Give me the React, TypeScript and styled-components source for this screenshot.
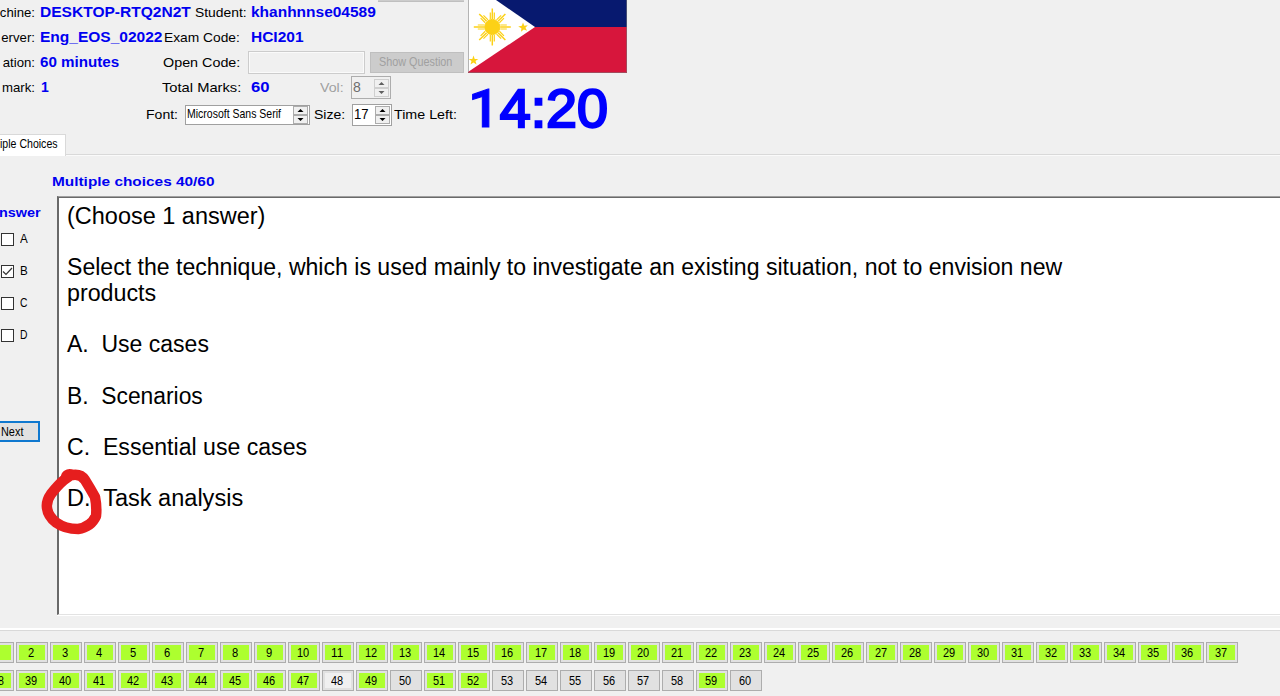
import React, { useLayoutEffect, useRef, useState } from 'react';
import styled, { createGlobalStyle } from 'styled-components';

const Global = createGlobalStyle`
  * { box-sizing: border-box; }
  body { margin: 0; background: #f0f0f0; overflow: hidden; font-family: "Liberation Sans", Arial, sans-serif; color: #000; }
`;

const FitBox = styled.span<{ $w: number; $gap: number; $dy: number; $size: number; $bold?: boolean; $color: string; $line?: number }>`
  display: block;
  flex: none;
  width: ${p => p.$w}px;
  margin-left: ${p => p.$gap}px;
  padding-top: ${p => p.$dy}px;
  font-size: ${p => p.$size}px;
  font-weight: ${p => (p.$bold ? 700 : 400)};
  color: ${p => p.$color};
  line-height: ${p => (p.$line ? `${p.$line}px` : 1.15)};
  white-space: pre;
`;
const FitInner = styled.span`
  display: inline-block;
  vertical-align: top;
  transform-origin: 0 50%;
`;

type FitProps = { w: number; size: number; gap?: number; dy?: number; bold?: boolean; color?: string; line?: number; children: React.ReactNode };

/* Text stretched or condensed horizontally to a fixed width. */
function Fit({ w, size, gap = 0, dy = 0, bold, color = '#000', line, children }: FitProps) {
  const ref = useRef<HTMLSpanElement>(null);
  const [scale, setScale] = useState(1);
  useLayoutEffect(() => {
    if (ref.current) setScale(w / ref.current.offsetWidth);
  }, [w, children]);
  return (
    <FitBox $w={w} $gap={gap} $dy={dy} $size={size} $bold={bold} $color={color} $line={line}>
      <FitInner ref={ref} style={{ transform: `scaleX(${scale})` }}>{children}</FitInner>
    </FitBox>
  );
}

const Blue = '#0000f0';

const Window = styled.div`
  width: 1280px;
  height: 696px;
  overflow: hidden;
  display: flex;
  flex-direction: column;
`;
const Header = styled.header`
  height: 134px;
  display: flex;
`;
const Info = styled.div`
  width: 468px;
  flex: none;
`;
const InfoRow = styled.div<{ $h?: number }>`
  height: ${p => p.$h || 25}px;
  display: flex;
  align-items: center;
`;
const EdgeLabel = styled.div`
  width: 35px;
  flex: none;
  display: flex;
  justify-content: flex-end;
  font-size: 13.2px;
  line-height: 16px;
  white-space: nowrap;
`;
const ButtonStub = styled.div`
  align-self: flex-start;
  width: 86px;
  height: 2px;
  margin-left: 2px;
  background: #cccccc;
  border-bottom: 1px solid #bfbfbf;
`;
const CodeInput = styled.div`
  width: 117px;
  height: 23px;
  margin-left: 8px;
  flex: none;
  border: 1px solid #cccccc;
  box-shadow: inset 0 0 0 1px #fafafa;
`;
const ShowButton = styled.div`
  width: 94px;
  height: 21px;
  margin-left: 5px;
  flex: none;
  display: flex;
  align-items: center;
  background: #cccccc;
  border: 1px solid #bfbfbf;
`;
const Spin = styled.div<{ $w: number; $h: number; $gap: number; $off?: boolean }>`
  width: ${p => p.$w}px;
  height: ${p => p.$h}px;
  margin-left: ${p => p.$gap}px;
  flex: none;
  display: flex;
  justify-content: space-between;
  align-items: center;
  border: 1px solid ${p => (p.$off ? '#adadad' : '#a0a0a0')};
  background: ${p => (p.$off ? '#f0f0f0' : '#fff')};
`;
const SpinButtons = styled.div<{ $off?: boolean }>`
  width: 15px;
  height: 18px;
  margin-right: 1px;
  display: grid;
  grid-template-rows: 1fr 1fr;
  svg { width: 15px; height: 9px; background: #f0f0f0; border: 1px solid ${p => (p.$off ? '#cfcfcf' : '#acacac')}; display: block; }
  path { fill: ${p => (p.$off ? '#606060' : '#000')}; }
`;
function Arrows({ off }: { off?: boolean }) {
  return (
    <SpinButtons $off={off}>
      <svg viewBox="0 0 13 7"><path d="M3.5 5h6L6.5 2z" /></svg>
      <svg viewBox="0 0 13 7"><path d="M3.5 2h6L6.5 5z" /></svg>
    </SpinButtons>
  );
}
const Side = styled.div`
  width: 160px;
`;
const FlagArt = styled.svg`
  display: block;
  width: 159px;
  height: 73px;
`;
const Clock = styled.span`
  -webkit-text-stroke: 2.4px #0000ff;
`;
const PlainOne = styled.span`
  font-family: Roboto, sans-serif;
  font-weight: 500;
  -webkit-text-stroke: 1px #0000ff;
`;

const TabStrip = styled.div`
  height: 22px;
  display: flex;
  align-items: flex-end;
`;
const Tab = styled.div`
  width: 66px;
  height: 22px;
  flex: none;
  display: flex;
  justify-content: flex-end;
  align-items: center;
  padding: 0 7px 2px 0;
  background: #fff;
  border: 1px solid #d9d9d9;
  border-width: 1px 1px 0 0;
`;
const TabLine = styled.div`
  flex: 1;
  height: 2px;
  background: #fafafa;
  border-top: 1px solid #d9d9d9;
`;
const Body = styled.main`
  height: 472px;
  display: grid;
  grid-template-columns: 57px 1fr;
  grid-template-rows: 40px 420px;
`;
const Title = styled.div`
  grid-column: 1 / 3;
  padding: 18px 0 0 52px;
`;
const Answers = styled.aside`
  display: flex;
  flex-direction: column;
`;
const AnswerHead = styled.div`
  width: 41px;
  height: 37px;
  padding-top: 9px;
  display: flex;
  justify-content: flex-end;
`;
const Choice = styled.div`
  height: 32px;
  padding-left: 1px;
  display: flex;
`;
const ChoiceLabel = styled.div`
  margin-top: -1px;
`;
const Check = styled.div`
  width: 13px;
  height: 13px;
  border: 1px solid #333;
  background: #fff;
  svg { display: block; width: 11px; height: 11px; }
`;
const NextButton = styled.div`
  width: 40px;
  height: 21px;
  margin-top: 60px;
  padding-top: 1px;
  display: flex;
  align-items: center;
  background: #e1e1e1;
  border: 2px solid #0f78cf;
  border-left: 0;
`;
const Question = styled.section`
  position: relative;
  height: 419px;
  padding: 7px 0 0 8px;
  background: #fff;
  border: 2px solid #696969;
  border-top: 1px solid #a0a0a0;
  border-right: 0;
  border-bottom: 1px solid #e3e3e3;
  border-left: 2px solid #696969;
  box-shadow: inset 0 1px #696969, 0 1px #fff;
`;
const Blank = styled.div`
  height: 25.65px;
`;
const Marker = styled.svg`
  position: absolute;
  left: -19px;
  top: 268px;
  width: 66px;
  height: 74px;
`;

const Divider = styled.div`
  height: 3px;
  background: #fff;
  border-bottom: 1px solid #d9d9d9;
`;
const Numbers = styled.footer`
  padding-top: 11px;
  display: flex;
  flex-direction: column;
  gap: 7px;
`;
const NumberRow = styled.div`
  display: flex;
  gap: 2px;
`;
const NumberButton = styled.div<{ $fill: string; $edge?: boolean }>`
  width: ${p => (p.$edge ? 14 : 32)}px;
  height: 21px;
  flex: none;
  display: flex;
  justify-content: ${p => (p.$edge ? 'flex-start' : 'center')};
  align-items: center;
  padding: 1px ${p => (p.$edge ? 0 : 2)}px 0 0;
  border: 1px solid #adadad;
  border-left-width: ${p => (p.$edge ? 0 : 1)}px;
  background: ${p => p.$fill};
  box-shadow: inset ${p => (p.$edge ? '-2px 0 0 0 #e1e1e1, inset 0 2px #e1e1e1, inset 0 -2px #e1e1e1' : '0 0 0 2px #e1e1e1')};
`;

const fillOf = (n: number) => {
  if (n === 48) return '#f0f0f0';
  return n < 50 || n === 51 || n === 52 || n === 59 ? '#adff2f' : '#e1e1e1';
};
const range = (a: number, b: number) => Array.from({ length: b - a + 1 }, (_, i) => a + i);

/* A row of question numbers; its first button is half scrolled out, showing only its tail. */
function NumberLine({ from, to, tail }: { from: number; to: number; tail?: string }) {
  return (
    <NumberRow>
      <NumberButton $fill={fillOf(from)} $edge>
        {tail && <Fit w={6} size={12.4} gap={-2}>{tail}</Fit>}
      </NumberButton>
      {range(from + 1, to).map(n => (
        <NumberButton key={n} $fill={fillOf(n)}>
          <Fit w={n < 10 ? 6.3 : 12.4} size={12.4}>{String(n)}</Fit>
        </NumberButton>
      ))}
    </NumberRow>
  );
}

function Flag() {
  return (
    <FlagArt viewBox="0 0 159 73">
      <path fill="#07196f" d="M0 0h159v27H0z" />
      <path fill="#d7163c" d="M0 27h159v46H0z" />
      <path fill="#fff" d="M0 0h28L67 27L0 72z" />
      <path d="M.5 0v72.5h158V0" fill="none" stroke="#777" strokeOpacity=".55" />
      <g fill="#fcd116" stroke="#fcd116">
        <circle cx="24.3" cy="27" r="7.6" />
        {range(0, 7).map(i => (
          <g key={i} transform={`rotate(${i * 45} 24.3 27)`}>
            <path strokeWidth="1.5" d="M24.3 19V8.500" />
            <path strokeWidth="1.2" d="M22.300 19V12.500M26.300 19V12.500" />
          </g>
        ))}
      </g>
      <g fill="#fcd116">
        <path d="M55 22.500l1.300 3.300 3.500-.5-2.400 2.400 1.700 3-3.300-1.300-2.800 2.300.4-3.500-3.200-1.800 3.600-.6z" />
        <path d="M5.500 55.500l1.200 3.400h3.600l-2.800 2.200 1 3.500-3-2.100-3 2.100 1-3.500-2.800-2.200h3.600z" />
      </g>
    </FlagArt>
  );
}

const options = [
  { text: 'A.  Use cases', w: 142 },
  { text: 'B.  Scenarios', w: 136 },
  { text: 'C.  Essential use cases', w: 240 },
  { text: 'D.  Task analysis', w: 176 },
];

export default function App() {
  const line = 25.65;
  return (
    <Window>
      <Global />
      <Header>
        <Info>
          <InfoRow>
            <EdgeLabel>chine:</EdgeLabel>
            <Fit w={151} size={14} gap={5} bold color={Blue}>DESKTOP-RTQ2N2T</Fit>
            <Fit w={52} size={13.6} gap={4}>Student:</Fit>
            <Fit w={125} size={14} gap={4} bold color={Blue}>khanhnnse04589</Fit>
            <ButtonStub />
          </InfoRow>
          <InfoRow>
            <EdgeLabel>erver:</EdgeLabel>
            <Fit w={123} size={14} gap={5} bold color={Blue}>Eng_EOS_02022</Fit>
            <Fit w={76} size={13.6} gap={1}>Exam Code:</Fit>
            <Fit w={52} size={14} gap={11} bold color={Blue}>HCI201</Fit>
          </InfoRow>
          <InfoRow>
            <EdgeLabel>ation:</EdgeLabel>
            <Fit w={79} size={14} gap={5} bold color={Blue}>60 minutes</Fit>
            <Fit w={77} size={13.6} gap={44}>Open Code:</Fit>
            <CodeInput />
            <ShowButton>
              <Fit w={73} size={12.6} gap={8} color="#a0a0a0">Show Question</Fit>
            </ShowButton>
          </InfoRow>
          <InfoRow>
            <EdgeLabel>mark:</EdgeLabel>
            <Fit w={8} size={14} gap={6} bold color={Blue}>1</Fit>
            <Fit w={79} size={13.6} gap={113}>Total Marks:</Fit>
            <Fit w={19} size={14} gap={10} bold color={Blue}>60</Fit>
            <Fit w={24} size={13.6} gap={50} color="#a0a0a0">Vol:</Fit>
            <Spin $w={40} $h={23} $gap={7} $off>
              <Fit w={8} size={14} gap={1} color="#6d6d6d">8</Fit>
              <Arrows off />
            </Spin>
          </InfoRow>
          <InfoRow $h={29}>
            <Fit w={32} size={13.6} gap={146}>Font:</Fit>
            <Spin $w={125} $h={20} $gap={7}>
              <Fit w={94} size={12.4} gap={1}>Microsoft Sans Serif</Fit>
              <Arrows />
            </Spin>
            <Fit w={31} size={13.6} gap={4}>Size:</Fit>
            <Spin $w={40} $h={22} $gap={7}>
              <Fit w={15} size={14} gap={1}>17</Fit>
              <Arrows />
            </Spin>
            <Fit w={63} size={13.6} gap={2}>Time Left:</Fit>
          </InfoRow>
        </Info>
        <Side>
          <Flag />
          <Fit w={140} size={54.500} dy={4} color="#0000ff"><Clock><PlainOne>1</PlainOne>4:20</Clock></Fit>
        </Side>
      </Header>
      <TabStrip>
        <Tab><Fit w={58} size={12.4}>iple Choices</Fit></Tab>
        <TabLine />
      </TabStrip>
      <Body>
        <Title><Fit w={162} size={13.4} bold color={Blue}>Multiple choices 40/60</Fit></Title>
        <Answers>
          <AnswerHead><Fit w={42} size={13.4} bold color={Blue}>nswer</Fit></AnswerHead>
          {['A', 'B', 'C', 'D'].map(c => (
            <Choice key={c}>
              <Check>
                {c === 'B' && (
                  <svg viewBox="0 0 11 11"><path d="M1 5.500l3 3 6-6.500" fill="none" stroke="#333" strokeWidth="1.200" /></svg>
                )}
              </Check>
              <ChoiceLabel><Fit w={7.500} size={12.4} gap={6}>{c}</Fit></ChoiceLabel>
            </Choice>
          ))}
          <NextButton><Fit w={22} size={12.4} gap={0.500}>Next</Fit></NextButton>
        </Answers>
        <Question>
          <Fit w={198} size={23} line={line}>(Choose 1 answer)</Fit>
          <Blank />
          <Fit w={995} size={23} line={line}>Select the technique, which is used mainly to investigate an existing situation, not to envision new</Fit>
          <Fit w={89} size={23} line={line}>products</Fit>
          {options.map(o => (
            <React.Fragment key={o.text}>
              <Blank />
              <Fit w={o.w} size={23} line={line}>{o.text}</Fit>
            </React.Fragment>
          ))}
          <Marker viewBox="0 0 66 74">
            <path d="M26 12Q27 8 33 10Q41 9 45 15Q50 23 55 32Q57 42 56 51Q51 62 38 64Q25 64 16 57.500Q8 51 7 43Q6 36 11 29Q18 20 24 15L31 10" fill="none" stroke="#e61e1e" strokeWidth="10.500" strokeLinecap="round" strokeLinejoin="round" />
          </Marker>
        </Question>
      </Body>
      <Divider />
      <Numbers>
        <NumberLine from={1} to={37} />
        <NumberLine from={38} to={60} tail="8" />
      </Numbers>
    </Window>
  );
}
